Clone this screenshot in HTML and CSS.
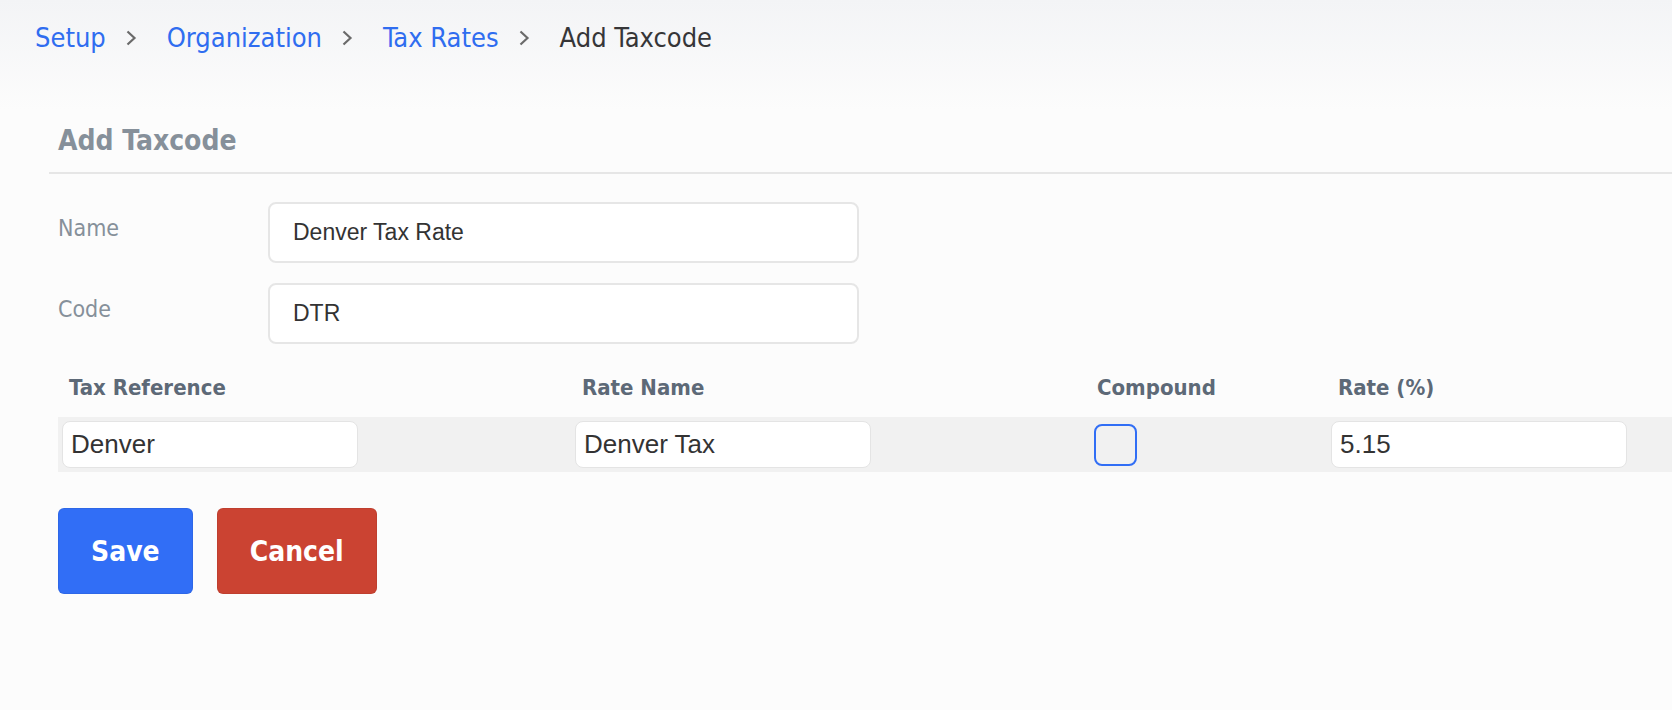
FILE: index.html
```html
<!DOCTYPE html>
<html lang="en">
  <head>
    <meta charset="UTF-8" />
    <meta name="viewport" content="width=device-width, initial-scale=1.0" />
    <title>Add Taxcode</title>
    <link rel="stylesheet" href="styles.css">
  </head>
  <body>
    <header class="topbar">
      <nav class="breadcrumb">
        <a href="#">Setup</a>
        <svg class="sep" viewBox="0 0 12 16" width="12" height="16"><path d="M2.5 1.5 L9.5 8 L2.5 14.5" /></svg>
        <a href="#">Organization</a>
        <svg class="sep" viewBox="0 0 12 16" width="12" height="16"><path d="M2.5 1.5 L9.5 8 L2.5 14.5" /></svg>
        <a href="#">Tax Rates</a>
        <svg class="sep" viewBox="0 0 12 16" width="12" height="16"><path d="M2.5 1.5 L9.5 8 L2.5 14.5" /></svg>
        <span class="current">Add Taxcode</span>
      </nav>
    </header>

    <main class="panel">
      <h2 class="panel-title">Add Taxcode</h2>

      <form class="taxcode-form" onsubmit="return false">
        <div class="field">
          <label for="name">Name</label>
          <input type="text" id="name" value="Denver Tax Rate" />
        </div>
        <div class="field">
          <label for="code">Code</label>
          <input type="text" id="code" value="DTR" />
        </div>

        <div class="rates">
          <div class="rates-head">
            <span>Tax Reference</span>
            <span>Rate Name</span>
            <span>Compound</span>
            <span>Rate (%)</span>
          </div>
          <div class="rates-row">
            <div class="cell"><input type="text" value="Denver" /></div>
            <div class="cell"><input type="text" value="Denver Tax" /></div>
            <div class="cell"><span class="checkbox"></span></div>
            <div class="cell"><input type="text" value="5.15" /></div>
          </div>
        </div>

        <div class="actions">
          <button class="btn save" type="submit">Save</button>
          <button class="btn cancel" type="button">Cancel</button>
        </div>
      </form>
    </main>
  </body>
</html>
```

FILE: styles.css
```css
body {
  margin: 0;
  background-color: #fcfcfc;
  font-family: "DejaVu Sans Condensed", "DejaVu Sans", sans-serif;
  font-stretch: condensed;
  color: #333;
}
.topbar {
  height: 110px;
  padding: 22px 35px 0;
  box-sizing: border-box;
  background: linear-gradient(#f3f4f6, #fcfcfc);
}
.breadcrumb {
  display: flex;
  align-items: center;
  font-size: 27px;
  line-height: 32px;
}
.breadcrumb a {
  color: #2f6df0;
  text-decoration: none;
}
.breadcrumb .current {
  color: #363638;
}
.sep {
  margin: 0 30px 0 19px;
  fill: none;
  stroke: #6a6a6a;
  stroke-width: 2.2;
}
.panel {
  margin-left: 49px;
  padding-top: 15px;
}
.panel-title {
  margin: 0;
  padding: 0 0 15px 9px;
  font-size: 28px;
  line-height: 32px;
  font-weight: bold;
  color: #86909a;
  border-bottom: 2px solid #e6e6e6;
}
.taxcode-form {
  padding: 28px 0 0 9px;
}
.field {
  display: grid;
  grid-template-columns: 210px 591px;
  margin-bottom: 20px;
}
.field label {
  padding-top: 13px;
  font-size: 23px;
  line-height: 26px;
  color: #86909a;
}
.field input {
  height: 61px;
  box-sizing: border-box;
  padding: 0 23px;
  border: 2px solid #e6e6e6;
  border-radius: 8px;
  background: #fff;
  font-family: "Liberation Sans", Arial, sans-serif;
  font-size: 23px;
  color: #333;
  outline: none;
}
.rates {
  margin-top: 31px;
}
.rates-head,
.rates-row {
  display: grid;
  grid-template-columns: 513px 519px 237px 1fr;
}
.rates-head span {
  padding-left: 11px;
  font-size: 22px;
  line-height: 26px;
  font-weight: bold;
  color: #5d6977;
}
.rates-head span:nth-child(3) {
  padding-left: 7px;
}
.rates-row {
  margin-top: 16px;
  height: 55px;
  align-items: center;
  background: #f1f1f1;
}
.cell {
  padding-left: 4px;
  display: flex;
  align-items: center;
}
.cell input {
  width: 296px;
  height: 47px;
  box-sizing: border-box;
  padding: 0 8px;
  border: 1px solid #e4e4e4;
  border-radius: 8px;
  background: #fff;
  font-family: "Liberation Sans", Arial, sans-serif;
  font-size: 26px;
  color: #333;
  outline: none;
}
.checkbox {
  width: 43px;
  height: 42px;
  box-sizing: border-box;
  border: 2px solid #316ef5;
  border-radius: 8px;
}
.actions {
  display: flex;
  gap: 24px;
  margin-top: 36px;
}
.btn {
  height: 86px;
  padding: 0 32px;
  border: 1px solid rgba(0, 0, 0, 0.06);
  border-radius: 6px;
  font-family: "DejaVu Sans Condensed", "DejaVu Sans", sans-serif;
  font-stretch: condensed;
  font-size: 28px;
  font-weight: bold;
  color: #fff;
  cursor: pointer;
}
.save {
  background: #316ef6;
}
.cancel {
  background: #cb4332;
}
```
